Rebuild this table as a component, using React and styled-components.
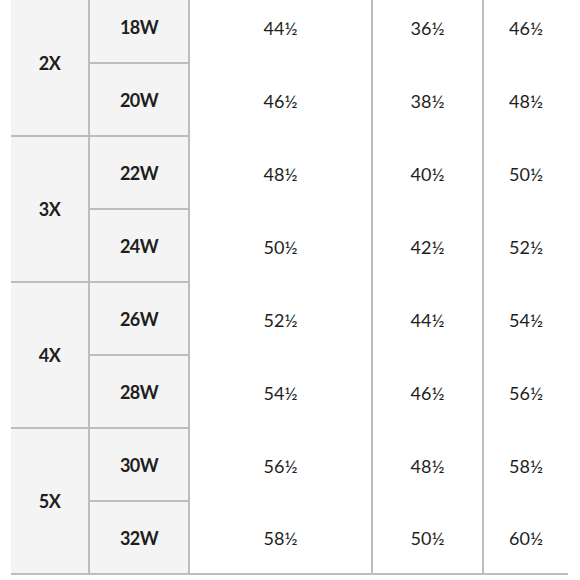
import React from 'react';
import styled, { createGlobalStyle } from 'styled-components';

const GlobalStyle = createGlobalStyle`
  html, body {
    margin: 0;
    padding: 0;
    background: #fff;
    overflow: hidden;
  }
`;

const Container = styled.div`
  padding-left: 11px;
  margin-top: -9px;
  font-family: Lato, 'Open Sans', sans-serif;
  color: #1e1e1e;
`;

const Table = styled.table`
  border-collapse: separate;
  border-spacing: 0;
  table-layout: fixed;
  width: 557px;
`;

const Col = styled.col`
  width: ${(p) => p.$w}px;
`;

const Cell = styled.td`
  box-sizing: border-box;
  height: 73px;
  padding: 0;
  text-align: center;
  vertical-align: middle;
  font-size: 18px;
  border-right: ${(p) => (p.$noRight ? 'none' : '2px solid #bdbdbd')};
  border-bottom: ${(p) => (p.$bottom ? '2px solid #bdbdbd' : 'none')};
`;

const SizeCell = styled(Cell)`
  background: #f4f4f4;
  font-weight: 700;
  letter-spacing: -0.6px;
`;

const ValueCell = styled(Cell)`
  background: #fff;
  font-weight: 400;
`;

const groups = [
  {
    size: '2X',
    rows: [
      ['18W', '44½', '36½', '46½'],
      ['20W', '46½', '38½', '48½'],
    ],
  },
  {
    size: '3X',
    rows: [
      ['22W', '48½', '40½', '50½'],
      ['24W', '50½', '42½', '52½'],
    ],
  },
  {
    size: '4X',
    rows: [
      ['26W', '52½', '44½', '54½'],
      ['28W', '54½', '46½', '56½'],
    ],
  },
  {
    size: '5X',
    rows: [
      ['30W', '56½', '48½', '58½'],
      ['32W', '58½', '50½', '60½'],
    ],
  },
];

function App() {
  return (
    <Container>
      <GlobalStyle />
      <Table>
        <colgroup>
          <Col $w={79} />
          <Col $w={100} />
          <Col $w={183} />
          <Col $w={111} />
          <Col $w={84} />
        </colgroup>
        <tbody>
          {groups.map((g, gi) =>
            g.rows.map((r, ri) => {
              const last = gi === groups.length - 1 && ri === g.rows.length - 1;
              return (
                <tr key={g.size + ri}>
                  {ri === 0 && (
                    <SizeCell rowSpan={2} $bottom>
                      {g.size}
                    </SizeCell>
                  )}
                  <SizeCell $bottom>{r[0]}</SizeCell>
                  <ValueCell $bottom={last}>{r[1]}</ValueCell>
                  <ValueCell $bottom={last}>{r[2]}</ValueCell>
                  <ValueCell $bottom={last} $noRight>
                    {r[3]}
                  </ValueCell>
                </tr>
              );
            })
          )}
        </tbody>
      </Table>
    </Container>
  );
}

export default App;
